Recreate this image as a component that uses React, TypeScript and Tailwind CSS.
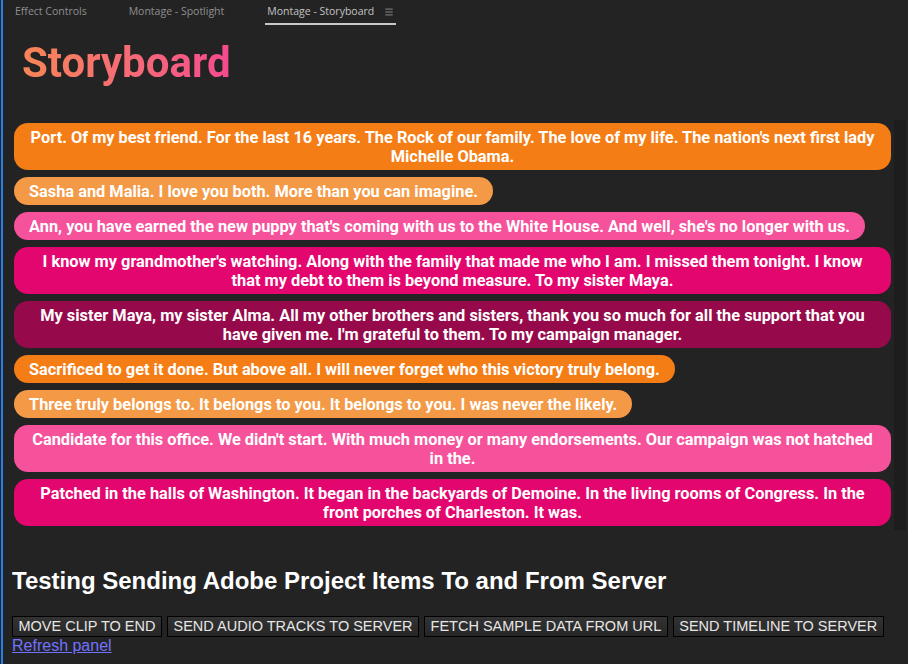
import { Menu } from "lucide-react";

interface Clip {
  text: string;
  color: string;
}

const clips: Clip[] = [
  {
    text: "Port. Of my best friend. For the last 16 years. The Rock of our family. The love of my life. The nation's next first lady Michelle Obama.",
    color: "bg-[#f57d16]",
  },
  { text: "Sasha and Malia. I love you both. More than you can imagine.", color: "bg-[#f49945]" },
  {
    text: "Ann, you have earned the new puppy that's coming with us to the White House. And well, she's no longer with us.",
    color: "bg-[#f6529c]",
  },
  {
    text: "I know my grandmother's watching. Along with the family that made me who I am. I missed them tonight. I know that my debt to them is beyond measure. To my sister Maya.",
    color: "bg-[#e4066f]",
  },
  {
    text: "My sister Maya, my sister Alma. All my other brothers and sisters, thank you so much for all the support that you have given me. I'm grateful to them. To my campaign manager.",
    color: "bg-[#960a4b]",
  },
  { text: "Sacrificed to get it done. But above all. I will never forget who this victory truly belong.", color: "bg-[#f57d16]" },
  { text: "Three truly belongs to. It belongs to you. It belongs to you. I was never the likely.", color: "bg-[#f49945]" },
  {
    text: "Candidate for this office. We didn't start. With much money or many endorsements. Our campaign was not hatched in the.",
    color: "bg-[#f6529c]",
  },
  {
    text: "Patched in the halls of Washington. It began in the backyards of Demoine. In the living rooms of Congress. In the front porches of Charleston. It was.",
    color: "bg-[#e4066f]",
  },
];

const actions = [
  "MOVE CLIP TO END",
  "SEND AUDIO TRACKS TO SERVER",
  "FETCH SAMPLE DATA FROM URL",
  "SEND TIMELINE TO SERVER",
];

function Tabs() {
  return (
    <div className="flex items-start h-[30px] pl-3 text-[10.5px] font-['Open_Sans',sans-serif] text-[#8f8f8f]">
      <div className="pt-[4px]">Effect Controls</div>
      <div className="pt-[4px] ml-[42px]">Montage - Spotlight</div>
      <div className="ml-[41px] flex items-center gap-[10px] pt-[4px] pb-[3px] px-[2px] border-b-2 border-[#c8c8c8] text-[#c4c4c4]">
        <span>Montage - Storyboard</span>
        <Menu size={10} strokeWidth={1.5} />
      </div>
    </div>
  );
}

export default function App() {
  return (
    <div className="w-[908px] h-[664px] bg-[#232323] border-l border-[#232323] overflow-hidden">
      <div className="h-full border-l-2 border-[#2680eb]">
        <Tabs />

        {/* titulo */}
        <h1 className="pl-[19px] mt-[8px] text-[42px] leading-[50px] font-bold font-['Roboto',sans-serif] bg-gradient-to-r from-[#f78a4c] to-[#f5488f] bg-clip-text text-transparent w-fit pr-1">
          Storyboard
        </h1>

        {/* lista de clips */}
        <div className="flex mt-[32px] pl-[11px]">
          <div className="flex-1 flex flex-col items-start gap-[7px] pt-[3px] pb-[4px]">
            {clips.map((clip, i) => (
              <div
                key={i}
                className={`${clip.color} rounded-[14px] px-[15px] pt-[5px] pb-[4px] text-white text-center text-[16.35px] leading-[19px] font-bold font-['Roboto',sans-serif]`}
              >
                {clip.text}
              </div>
            ))}
          </div>
          <div className="w-[3px]" />
          <div className="w-[12px] bg-[#1d1d1d]" />
          <div className="w-[2px]" />
        </div>

        {/* seccion de pruebas */}
        <div className="pl-[9px] font-['Liberation_Sans',Arial,sans-serif]">
          <h2 className="mt-[37px] text-[24px] leading-[28px] font-bold text-white">
            Testing Sending Adobe Project Items To and From Server
          </h2>
          <div className="flex gap-[5px] mt-[21px]">
            {actions.map((a) => (
              <button
                key={a}
                className="h-[21px] px-[5.5px] bg-gradient-to-b from-[#333333] to-[#262626] border border-black text-[#e6e6e6] text-[14.5px] leading-[19px]"
              >
                {a}
              </button>
            ))}
          </div>
          <a href="#" className="block w-fit text-[16px] leading-[17px] text-[#7272ff] underline">
            Refresh panel
          </a>
        </div>
      </div>
    </div>
  );
}
